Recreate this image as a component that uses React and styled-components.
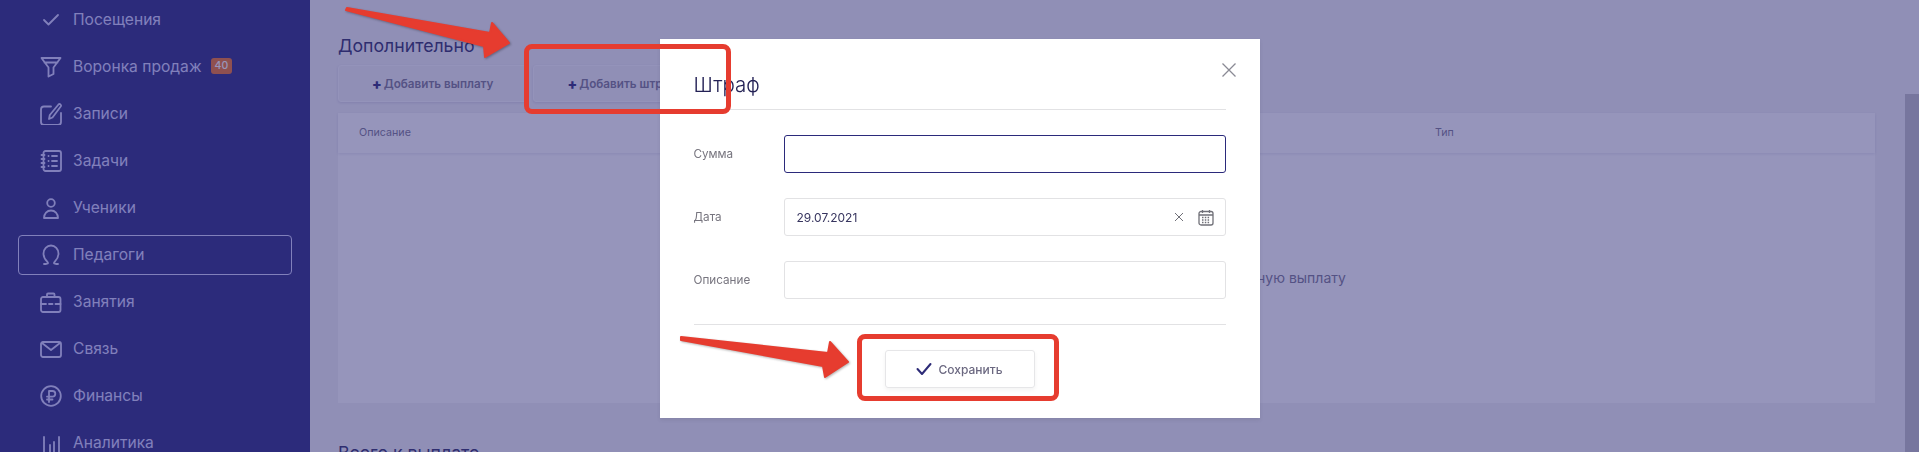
import React from "react";
import styled, { createGlobalStyle } from "styled-components";

const GlobalStyle = createGlobalStyle`
  html, body {
    margin: 0;
    height: 452px;
    overflow: hidden;
    background: #f3f3f5;
    font-family: "Inter", "Noto Sans", sans-serif;
  }
  * { box-sizing: border-box; }
`;

const Icon = ({ children }) => (
  <IconSvg viewBox="0 0 24 24" fill="none" stroke="currentColor" strokeWidth="1.8" strokeLinecap="round" strokeLinejoin="round">
    {children}
  </IconSvg>
);

const navItems = [
  { label: "Посещения", icon: <path d="M5 13l4.5 4.5L19 8" /> },
  {
    label: "Воронка продаж",
    badge: "40",
    icon: <path d="M2.5 4h19l-7 9.5v6.5l-5 2.5v-9zM5.5 8.5h13" />,
  },
  {
    label: "Записи",
    icon: (
      <>
        <path d="M12 5.5H5a3 3 0 0 0-3 3V21a3 3 0 0 0 3 3h14a3 3 0 0 0 3-3v-9" />
        <path d="M10 18l.8-4L19.5 3.5c1.2-1.2 3.2.3 2.4 1.8L13.5 16.5z" />
      </>
    ),
  },
  {
    label: "Задачи",
    icon: (
      <>
        <rect x="4.5" y="3" width="17.5" height="20" rx="2" />
        <path d="M2.5 7h3M2.5 11h3M2.5 15h3M2.5 19h3M9.5 8h.1M13 8h5M9.5 13h.1M13 13h5M9.5 18h.1M13 18h5" />
      </>
    ),
  },
  {
    label: "Ученики",
    icon: (
      <>
        <circle cx="12" cy="8" r="3.8" />
        <path d="M5 23c0-4.500 3-7.500 7-7.500s7 3 7 7.500z" />
      </>
    ),
  },
  {
    label: "Педагоги",
    active: true,
    icon: <path d="M5 22c1.500 0 3.500 0 4-1 .4-1.200-4.500-3-4.500-9.500a7.500 8 0 0 1 15 0c0 6.500-4.900 8.300-4.500 9.500.5 1 2.500 1 4 1" />,
  },
  {
    label: "Занятия",
    icon: (
      <>
        <rect x="2" y="7" width="19.500" height="15" rx="2" />
        <path d="M8 7V4.500a1 1 0 0 1 1-1h5.500a1 1 0 0 1 1 1V7M2 14h5M10 14h3.500M16.500 14h5" />
      </>
    ),
  },
  {
    label: "Связь",
    icon: (
      <>
        <rect x="2" y="5" width="20" height="15" rx="2" />
        <path d="M3 6l9 7 9-7" />
      </>
    ),
  },
  {
    label: "Финансы",
    icon: (
      <>
        <circle cx="12" cy="12" r="9.800" />
        <path d="M10 18V7h3.500a2.800 2.800 0 0 1 0 5.600H8M8 15.500h5.500" />
      </>
    ),
  },
  { label: "Аналитика", icon: <path d="M5 6v18M11 14v10M15 11v13M20 6v18" /> },
];

const App = () => {
  return (
    <>
      <GlobalStyle />
      <Page>
        <Sidebar>
          {navItems.map((item) => (
            <NavItem key={item.label} $active={item.active}>
              <Icon>{item.icon}</Icon>
              {item.label}
              {item.badge && <Badge>{item.badge}</Badge>}
            </NavItem>
          ))}
        </Sidebar>

        <Main>
          <SectionTitle>Дополнительно</SectionTitle>
          <ButtonRow>
            <AddButton><b>+</b> Добавить выплату</AddButton>
            <AddButton><b>+</b> Добавить штраф</AddButton>
          </ButtonRow>
          <Table>
            <TableHead>
              <span>Описание</span>
              <span>Тип</span>
            </TableHead>
            <TableBody>Здесь пока нет записей, добавьте штраф или единовременную выплату</TableBody>
          </Table>
          <NextTitle>Всего к выплате</NextTitle>
        </Main>

        <ScrollThumb />
      </Page>

      <Overlay>
        <Modal>
          <CloseButton>
            <svg width="16" height="16" viewBox="0 0 16 16" fill="none" stroke="currentColor" strokeWidth="1.300">
              <path d="M1.500 1.500l13 13M14.500 1.500l-13 13" />
            </svg>
          </CloseButton>
          <ModalTitle>Штраф</ModalTitle>
          <Form>
            <Label>Сумма</Label>
            <Field $focused />
            <Label>Дата</Label>
            <Field>
              29.07.2021
              <FieldIcons>
                <svg width="10" height="10" viewBox="0 0 10 10" fill="none" stroke="currentColor" strokeWidth="1">
                  <path d="M1 1l8 8M9 1l-8 8" />
                </svg>
                <svg width="16" height="17" viewBox="0 0 16 17" fill="none" stroke="currentColor" strokeWidth="1.300">
                  <rect x="1" y="2.500" width="14" height="13.500" rx="2" />
                  <path d="M1 6h14M4.500 1v3M11.500 1v3" />
                  <path d="M4 8.500h8M4 11h8M4 13.500h8" strokeDasharray="1.500 1.300" strokeWidth="1.500" />
                </svg>
              </FieldIcons>
            </Field>
            <Label>Описание</Label>
            <Field />
          </Form>
          <ModalFooter>
            <SaveButton>
              <svg width="16" height="14" viewBox="0 0 16 14" fill="none" stroke="#2d2b77" strokeWidth="2" strokeLinecap="round" strokeLinejoin="round">
                <path d="M1.500 7l4.500 5L14.500 2" />
              </svg>
              Сохранить
            </SaveButton>
          </ModalFooter>
        </Modal>
      </Overlay>

      <RedBox $x={524} $y={44} $w={207} $h={70} />
      <RedBox $x={857} $y={334} $w={202} $h={67} />
      <Arrow $x={340} $y={0} width="175" height="65" viewBox="0 0 175 65">
        <polygon points="7,8 150,33 152,23 169,43 145,57 144,46 6,10" />
      </Arrow>
      <Arrow $x={675} $y={330} width="180" height="55" viewBox="0 0 180 55">
        <polygon points="6,7 153,23 155,12 173,32 150,47 148,36 6,10" />
      </Arrow>
    </>
  );
};

const Page = styled.div`
  display: flex;
  height: 452px;
  overflow: hidden;
`;

const Sidebar = styled.nav`
  flex: 0 0 310px;
  display: flex;
  flex-direction: column;
  gap: 7.1px;
  padding: 0 18px;
  background: #2b2b7f;
`;

const NavItem = styled.div`
  flex: 0 0 40px;
  display: flex;
  align-items: center;
  gap: 10px;
  padding: 0 0 2px 20px;
  border: 1px solid ${(p) => (p.$active ? "#d5d5ff" : "transparent")};
  border-radius: 4px;
  color: #d5d5ff;
  font-size: 15.6px;
`;

const IconSvg = styled.svg`
  flex: 0 0 24px;
  width: 24px;
  height: 24px;
`;

const Badge = styled.span`
  margin-left: -1px;
  padding: 0 4px;
  border-radius: 3px;
  background: #f17529;
  color: #fff;
  font-size: 10.5px;
  font-weight: 500;
  line-height: 16px;
`;

const Main = styled.main`
  flex: 1;
  padding: 34px 44px 0 28px;
`;

const SectionTitle = styled.h2`
  margin: 0 0 7px;
  color: #2f2e66;
  font-size: 17.7px;
  font-weight: 400;
  line-height: 24px;
`;

const ButtonRow = styled.div`
  display: flex;
  gap: 6px;
  margin-bottom: 11px;
`;

const AddButton = styled.div`
  height: 37px;
  display: flex;
  align-items: center;
  justify-content: center;
  gap: 2px;
  padding: 0 33px;
  border: 1px solid #fafafc;
  border-radius: 3px;
  background: #f3f3f5;
  box-shadow: 0 1px 3px rgba(45, 43, 119, 0.15);
  color: #7b7890;
  font-size: 11.7px;
  font-weight: 600;

  b {
    color: #2d2b77;
    font-size: 14px;
  }
`;

const Table = styled.div`
  height: 290px;
  background: #fff;
  display: flex;
  flex-direction: column;
`;

const TableHead = styled.div`
  flex: 0 0 40px;
  display: grid;
  grid-template-columns: 1076px 1fr;
  align-items: center;
  padding: 0 0 2px 21px;
  box-shadow: 0 1px 3px rgba(45, 43, 119, 0.12);
  color: #7b7890;
  font-size: 10.7px;
`;

const TableBody = styled.div`
  flex: 1;
  display: flex;
  align-items: center;
  justify-content: center;
  padding: 0 20px 2px 0;
  color: #7b7890;
  font-size: 14px;
`;

const NextTitle = styled(SectionTitle)`
  margin-top: 38px;
`;

const ScrollThumb = styled.div`
  position: absolute;
  top: 94px;
  right: 0;
  bottom: 0;
  width: 14px;
  background: #c1c1c5;
`;

const Overlay = styled.div`
  position: fixed;
  inset: 0;
  display: flex;
  justify-content: center;
  align-items: flex-start;
  padding-top: 39px;
  background: rgba(45, 43, 119, 0.5);
`;

const Modal = styled.div`
  position: relative;
  width: 600px;
  height: 379px;
  padding: 31px 34px 30px;
  background: #fff;
  box-shadow: 0 2px 4px rgba(0, 0, 0, 0.08);
`;

const CloseButton = styled.div`
  position: absolute;
  top: 23px;
  right: 23px;
  display: flex;
  color: #8a8a94;
`;

const ModalTitle = styled.h3`
  margin: 0 0 25px;
  padding-bottom: 9px;
  border-bottom: 1px solid #e2e2e4;
  color: #232155;
  font-size: 20.5px;
  font-weight: 300;
  line-height: 30px;
`;

const Form = styled.div`
  display: grid;
  grid-template-columns: 90px 1fr;
  align-items: center;
  row-gap: 25px;
`;

const Label = styled.label`
  color: #77757f;
  font-size: 11.7px;
`;

const Field = styled.div`
  height: 38px;
  display: flex;
  align-items: center;
  justify-content: space-between;
  padding: 0 12px;
  border: 1px solid ${(p) => (p.$focused ? "#2b2a7b" : "#e2e2e4")};
  border-radius: 3px;
  color: #37355f;
  font-size: 12px;
`;

const FieldIcons = styled.div`
  display: flex;
  align-items: center;
  gap: 14px;
  margin-right: -1px;
  color: #707078;
`;

const ModalFooter = styled.div`
  display: flex;
  justify-content: center;
  margin-top: 25px;
  padding-top: 25px;
  border-top: 1px solid #e2e2e4;
`;

const SaveButton = styled.div`
  width: 150px;
  height: 38px;
  display: flex;
  align-items: center;
  justify-content: center;
  gap: 6px;
  border: 1px solid #e6e6e8;
  border-radius: 3px;
  box-shadow: 0 2px 4px rgba(0, 0, 0, 0.05);
  color: #6b6880;
  font-size: 12px;
  font-weight: 500;
`;

const RedBox = styled.div`
  position: fixed;
  left: ${(p) => p.$x}px;
  top: ${(p) => p.$y}px;
  width: ${(p) => p.$w}px;
  height: ${(p) => p.$h}px;
  border: 5px solid #e63c2f;
  border-radius: 8px;
`;

const Arrow = styled.svg`
  position: fixed;
  left: ${(p) => p.$x}px;
  top: ${(p) => p.$y}px;
  fill: #e63c2f;
  stroke: #e63c2f;
  stroke-width: 2;
  stroke-linejoin: round;
  filter: drop-shadow(1px 1px 1px rgba(0, 0, 0, 0.3));
`;

export default App;
